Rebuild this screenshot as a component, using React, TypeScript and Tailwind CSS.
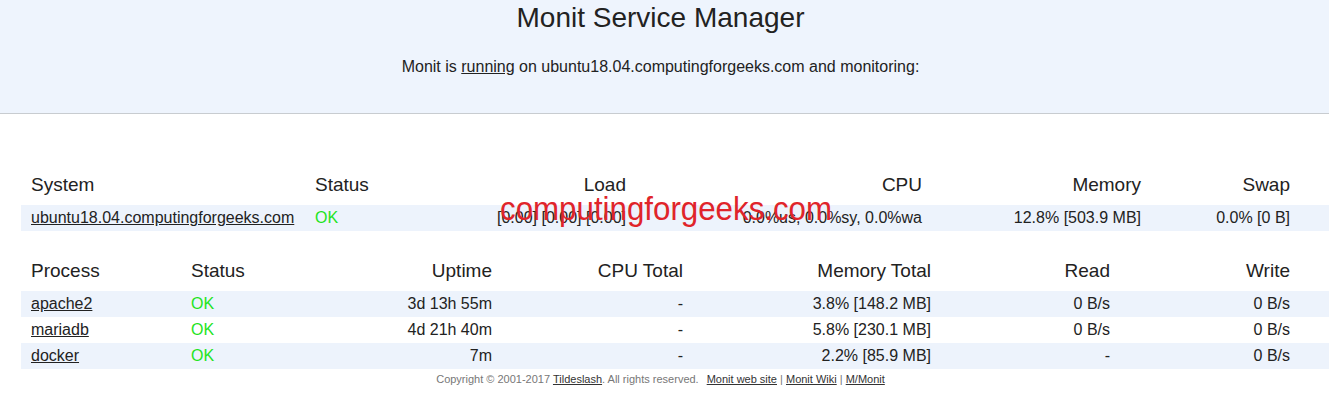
import React from "react";

const sysCols = "grid-cols-[284px_150px_181px_296px_219px_149px]";
const procCols = "grid-cols-[160px_149px_172px_191px_248px_179px_180px]";

function Cell({ children, right, className = "" }: { children: React.ReactNode; right?: boolean; className?: string }) {
  return <div className={`px-[10px] whitespace-nowrap ${right ? "text-right" : "text-left"} ${className}`}>{children}</div>;
}

const OK = () => <span className="text-[#1fe41f]">OK</span>;
const L = ({ children }: { children: React.ReactNode }) => <a className="underline text-[#222]">{children}</a>;

export default function App() {
  const procs = [
    ["apache2", "3d 13h 55m", "-", "3.8% [148.2 MB]", "0 B/s", "0 B/s"],
    ["mariadb", "4d 21h 40m", "-", "5.8% [230.1 MB]", "0 B/s", "0 B/s"],
    ["docker", "7m", "-", "2.2% [85.9 MB]", "-", "0 B/s"],
  ];
  return (
    <div className="relative w-[1329px] h-[414px] bg-white text-[#222] overflow-hidden" style={{ fontFamily: '"Liberation Sans", Arial, sans-serif' }}>
      <header className="bg-[#eef4fd] border-b border-[#c8ccd0] h-[114px] pt-[2px] pr-[8px] text-center">
        <h1 className="text-[28px] leading-[32px]">Monit Service Manager</h1>
        <p className="mt-[24px] text-[16px] leading-[18px]">
          Monit is <L>running</L> on ubuntu18.04.computingforgeeks.com and monitoring:
        </p>
      </header>
      <main className="pl-[21px] pt-[56px]">
        <div className={`grid ${sysCols} h-[35px] pt-[4px] text-[19px] leading-[22px]`}>
          <Cell>System</Cell>
          <Cell>Status</Cell>
          <Cell right>Load</Cell>
          <Cell right>CPU</Cell>
          <Cell right>Memory</Cell>
          <Cell right>Swap</Cell>
        </div>
        <div className={`grid ${sysCols} h-[26px] items-center bg-[#edf3fc] text-[16px]`}>
          <Cell><L>ubuntu18.04.computingforgeeks.com</L></Cell>
          <Cell><OK /></Cell>
          <Cell right>[0.00] [0.00] [0.00]</Cell>
          <Cell right>0.0%us, 0.0%sy, 0.0%wa</Cell>
          <Cell right>12.8% [503.9 MB]</Cell>
          <Cell right>0.0% [0 B]</Cell>
        </div>
        <div className={`grid ${procCols} mt-[25px] h-[35px] pt-[4px] text-[19px] leading-[22px]`}>
          <Cell>Process</Cell>
          <Cell>Status</Cell>
          <Cell right>Uptime</Cell>
          <Cell right>CPU Total</Cell>
          <Cell right>Memory Total</Cell>
          <Cell right>Read</Cell>
          <Cell right>Write</Cell>
        </div>
        {procs.map((p, i) => (
          <div key={p[0]} className={`grid ${procCols} h-[26px] items-center text-[16px] ${i % 2 === 0 ? "bg-[#edf3fc]" : "bg-white"}`}>
            <Cell><L>{p[0]}</L></Cell>
            <Cell><OK /></Cell>
            <Cell right>{p[1]}</Cell>
            <Cell right>{p[2]}</Cell>
            <Cell right>{p[3]}</Cell>
            <Cell right>{p[4]}</Cell>
            <Cell right>{p[5]}</Cell>
          </div>
        ))}
        <p className="w-[1279px] mt-[4px] text-center text-[11px] leading-[13px] text-[#777]">
          Copyright © 2001-2017 <a className="underline text-[#333]">Tildeslash</a>. All rights reserved.
          <span className="inline-block w-[8px]" />
          <a className="underline text-[#333]">Monit web site</a> | <a className="underline text-[#333]">Monit Wiki</a> | <a className="underline text-[#333]">M/Monit</a>
        </p>
      </main>
      <div className="absolute left-[500px] top-[183px] text-[34px] leading-normal text-[#e0242a] origin-left scale-x-[0.92] whitespace-nowrap pointer-events-none">
        computingforgeeks.com
      </div>
    </div>
  );
}
